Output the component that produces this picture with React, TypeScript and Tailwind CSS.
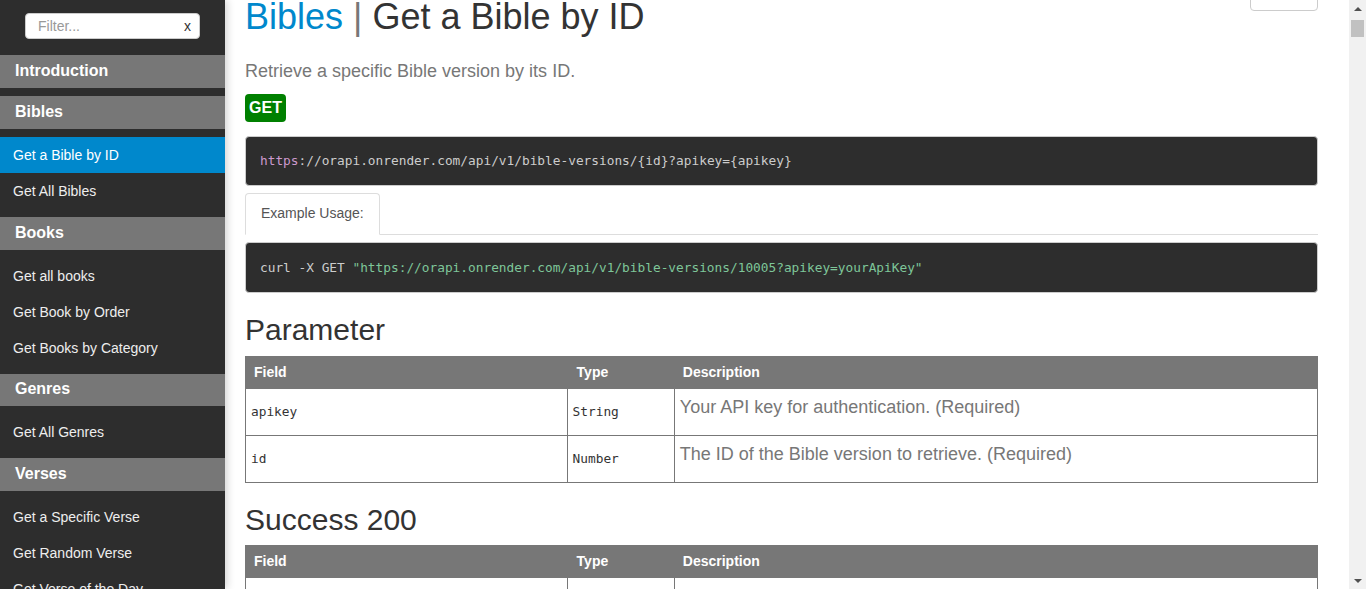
const nav = [
  { title: 'Introduction', items: [] as string[] },
  { title: 'Bibles', items: ['Get a Bible by ID', 'Get All Bibles'] },
  { title: 'Books', items: ['Get all books', 'Get Book by Order', 'Get Books by Category'] },
  { title: 'Genres', items: ['Get All Genres'] },
  { title: 'Verses', items: ['Get a Specific Verse', 'Get Random Verse', 'Get Verse of the Day'] },
];

const params = [
  { field: 'apikey', type: 'String', desc: 'Your API key for authentication. (Required)' },
  { field: 'id', type: 'Number', desc: 'The ID of the Bible version to retrieve. (Required)' },
];

const mono = "font-['DejaVu_Sans_Mono',monospace] text-[12.8px]";

const Sidebar = () => {
  return (
    <aside className="relative z-10 w-[225px] shrink-0 h-full bg-[#2d2d2d] shadow-[2px_0_8px_rgba(0,0,0,0.18)] overflow-hidden">
      {/* Filter */}
      <div className="pt-[13px] pb-[16px] pl-[25px] pr-[25px]">
        <div className="h-[26px] bg-white rounded-[4px] border border-[#ccc] flex items-center justify-between pl-[12px] pr-[8px] text-[14px]">
          <span className="text-[#999]">Filter...</span>
          <span className="text-[#333]">x</span>
        </div>
      </div>

      <ul>
        {nav.map((group, gi) => (
          <li key={group.title}>
            <div
              className={`bg-[#777] text-white font-bold text-[16px] pl-[15px] pb-[2px] flex items-center ${
                gi === 0 ? '' : 'mt-[8px]'
              } ${group.title === 'Genres' ? 'h-[32px]' : 'h-[33px]'}`}
            >
              {group.title}
            </div>
            {group.items.length > 0 && (
              <ul className="mt-[8px]">
                {group.items.map((item) => (
                  <li
                    key={item}
                    className={`h-[36px] flex items-center pl-[13px] text-[14px] ${
                      item === 'Get a Bible by ID' ? 'bg-[#0088cc] text-white' : 'text-[#eee]'
                    }`}
                  >
                    {item}
                  </li>
                ))}
              </ul>
            )}
          </li>
        ))}
      </ul>
    </aside>
  );
};

const ParamTable = ({ rows }: { rows: { field: string; type: string; desc: string }[] }) => {
  return (
    <table className="w-full border-collapse table-fixed">
      <thead>
        <tr className="h-[32px] bg-[#777] text-white text-[14px] font-bold text-left">
          <th className="w-[30%] pl-[8px] border border-[#777]">Field</th>
          <th className="w-[10%] pl-[9px] border border-[#777]">Type</th>
          <th className="w-[60%] pl-[8px] border border-[#777]">Description</th>
        </tr>
      </thead>
      <tbody>
        {rows.map((r) => (
          <tr key={r.field} className="h-[47px]">
            <td className={`border border-[#777] px-[5px] align-middle text-[#333] ${mono}`}>{r.field}</td>
            <td className={`border border-[#777] px-[5px] align-middle text-[#333] ${mono}`}>{r.type}</td>
            <td className="border border-[#777] px-[5px] pt-[5px] pb-[5px] align-top">
              <p className="text-[18px] leading-[26px] text-[#777] mb-[10px]">{r.desc}</p>
            </td>
          </tr>
        ))}
      </tbody>
    </table>
  );
};

const Scrollbar = () => {
  return (
    <div className="w-[17px] shrink-0 h-full bg-[#f1f1f1] flex flex-col items-center">
      <div className="h-[17px] w-full flex items-center justify-center">
        <div className="w-0 h-0 border-l-[4px] border-r-[4px] border-b-[4px] border-l-transparent border-r-transparent border-b-[#505050]" />
      </div>
      <div className="mt-[3px] w-[13px] h-[17px] bg-[#c1c1c1]" />
      <div className="flex-1" />
      <div className="h-[17px] w-full flex items-center justify-center">
        <div className="w-0 h-0 border-l-[4px] border-r-[4px] border-t-[4px] border-l-transparent border-r-transparent border-t-[#505050]" />
      </div>
    </div>
  );
};

const App = () => {
  return (
    <div className="h-[589px] w-full flex overflow-hidden bg-white font-['Liberation_Sans',Arial,sans-serif]">
      <Sidebar />

      <main className="flex-1 h-full overflow-hidden pl-[20px] pr-[31px]">
        {/* Title row */}
        <div className="flex items-start justify-between">
          <h1 className="mt-[-3px] text-[36px] leading-[1.1] text-[#333]">
            <span className="text-[#0088cc]">Bibles</span>
            <span className="text-[#777]"> | </span>
            Get a Bible by ID
          </h1>
          <div className="mt-[-20px] w-[68px] h-[31px] border border-[#ccc] rounded-[4px] bg-white" />
        </div>

        <p className="mt-[21px] text-[18px] leading-[26px] text-[#777]">
          Retrieve a specific Bible version by its ID.
        </p>

        <div className="mt-[10px] flex items-center justify-center h-[28px] w-[41px] rounded-[4px] bg-[#008000] text-white font-bold text-[16px]">
          GET
        </div>

        {/* Endpoint */}
        <pre className={`mt-[14px] h-[50px] flex items-center rounded-[4px] border border-[#ccc] bg-[#2d2d2d] px-[14px] text-[#ccc] ${mono}`}>
          <span className="text-[#cc99cd]">https</span>://orapi.onrender.com/api/v1/bible-versions/{'{id}'}?apikey={'{apikey}'}
        </pre>

        {/* Tabs */}
        <div className="mt-[7px] flex border-b border-[#ddd]">
          <div className="h-[42px] w-[135px] -mb-px flex items-center pl-[15px] border border-[#ddd] border-b-white rounded-t-[4px] bg-white text-[14px] text-[#555]">
            Example Usage:
          </div>
        </div>

        <pre className={`mt-[7px] h-[51px] flex items-center rounded-[4px] border border-[#ccc] bg-[#2d2d2d] px-[14px] text-[#ccc] ${mono}`}>
          {'curl -X GET '}
          <span className="text-[#7ec699]">"https://orapi.onrender.com/api/v1/bible-versions/10005?apikey=yourApiKey"</span>
        </pre>

        <h2 className="mt-[20px] text-[30px] leading-[33px] text-[#333]">Parameter</h2>
        <div className="mt-[10px]">
          <ParamTable rows={params} />
        </div>

        <h2 className="mt-[20px] text-[30px] leading-[33px] text-[#333]">Success 200</h2>
        <div className="mt-[9px]">
          <ParamTable
            rows={[{ field: 'data', type: 'Object', desc: 'Details of the requested Bible version.' }]}
          />
        </div>
      </main>

      <Scrollbar />
    </div>
  );
};

export default App;
